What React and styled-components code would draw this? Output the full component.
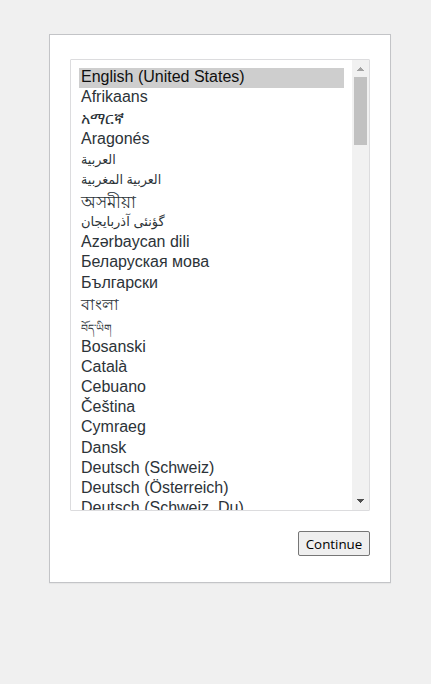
import React from "react";
import styled, { createGlobalStyle } from "styled-components";

const GlobalStyle = createGlobalStyle`
  * { box-sizing: border-box; }
  body { margin: 0; background: #f0f0f0; }
`;

const Page = styled.main`
  min-height: 684px;
  padding: 34px 40px 0 49px;
  background: #f0f0f0;
`;

const SetupCard = styled.form`
  width: 342px;
  height: 549px;
  padding: 24px 20px 0;
  display: flex;
  flex-direction: column;
  align-items: flex-end;
  gap: 20px;
  background: #fff;
  border: 1px solid #c3c4c7;
  box-shadow: 0 1px 1px rgba(0, 0, 0, 0.04);
`;

const ListBox = styled.div`
  width: 300px;
  height: 452px;
  display: flex;
  overflow: hidden;
  border: 1px solid #dcdcde;
  border-radius: 1px;
`;

const Options = styled.div`
  flex: 1;
  padding: 8px;
  overflow: hidden;
`;

const Option = styled.div`
  height: ${(p) => p.$height}px;
  padding: 0 2px;
  white-space: nowrap;
  color: ${(p) => (p.$selected ? "#101010" : "#2c3338")};
  background: ${(p) => (p.$selected ? "#cecece" : "transparent")};
  font-family: "Liberation Sans", "Noto Sans", "DejaVu Sans", sans-serif;
  font-size: ${(p) => p.$size || 16}px;
  font-weight: ${(p) => p.$weight || 400};
  line-height: ${(p) => p.$line || 17}px;
`;

const ScrollBar = styled.div`
  width: 17px;
  height: 450px;
  padding: 0 2px;
  display: flex;
  flex-direction: column;
  background: #f1f1f1;
`;

const ArrowButton = styled.div`
  height: 17px;
  padding-bottom: ${(p) => p.$lift || 0}px;
  display: flex;
  align-items: center;
  justify-content: center;
  color: ${(p) => p.$color};
`;

const Track = styled.div`
  flex: 1;
`;

const Thumb = styled.div`
  height: 68px;
  background: #c1c1c1;
`;

const ContinueButton = styled.button`
  width: 72px;
  height: 25px;
  padding: 2px 0 0;
  border: 1px solid #767676;
  border-radius: 2px;
  background: #efefef;
  color: #000;
  font-family: "Open Sans", "Noto Sans", sans-serif;
  font-size: 13.33px;
  line-height: 21px;
`;

const languages = [
  { name: "English (United States)", height: 20, selected: true },
  { name: "Afrikaans", height: 20 },
  { name: "አማርኛ", height: 22, line: 22 },
  { name: "Aragonés", height: 20 },
  { name: "العربية", height: 21, size: 12.7, line: 20 },
  { name: "العربية المغربية", height: 20, size: 12.7, line: 19 },
  { name: "অসমীয়া", height: 22, line: 22, size: 17.2, weight: 500 },
  { name: "گؤنئی آذربایجان", height: 20, size: 13, line: 17 },
  { name: "Azərbaycan dili", height: 20 },
  { name: "Беларуская мова", height: 21 },
  { name: "Български", height: 20 },
  { name: "বাংলা", height: 22, line: 22, weight: 500 },
  { name: "བོད་ཡིག", height: 22, line: 24, size: 10.7 },
  { name: "Bosanski", height: 20 },
  { name: "Català", height: 20 },
  { name: "Cebuano", height: 20 },
  { name: "Čeština", height: 20 },
  { name: "Cymraeg", height: 21 },
  { name: "Dansk", height: 20 },
  { name: "Deutsch (Schweiz)", height: 20 },
  { name: "Deutsch (Österreich)", height: 20 },
  { name: "Deutsch (Schweiz, Du)", height: 20 },
];

export default function App() {
  return (
    <>
      <GlobalStyle />
      <Page>
        <SetupCard>
          <ListBox role="listbox">
            <Options>
              {languages.map((l) => (
                <Option
                  key={l.name}
                  role="option"
                  $height={l.height}
                  $line={l.line}
                  $size={l.size}
                  $weight={l.weight}
                  $selected={l.selected}
                >
                  {l.name}
                </Option>
              ))}
            </Options>
            <ScrollBar>
              <ArrowButton $color="#a3a3a3">
                <svg width="7" height="4" viewBox="0 0 7 4" fill="currentColor" shapeRendering="crispEdges">
                  <path d="M3 0h1v1h1v1h1v1h1v1H0V3h1V2h1V1h1z" />
                </svg>
              </ArrowButton>
              <Thumb />
              <Track />
              <ArrowButton $color="#505050" $lift={2}>
                <svg width="7" height="4" viewBox="0 0 7 4" fill="currentColor" shapeRendering="crispEdges">
                  <path d="M0 0h7v1H6v1H5v1H4v1H3V3H2V2H1V1H0z" />
                </svg>
              </ArrowButton>
            </ScrollBar>
          </ListBox>
          <ContinueButton type="button">Continue</ContinueButton>
        </SetupCard>
      </Page>
    </>
  );
}
